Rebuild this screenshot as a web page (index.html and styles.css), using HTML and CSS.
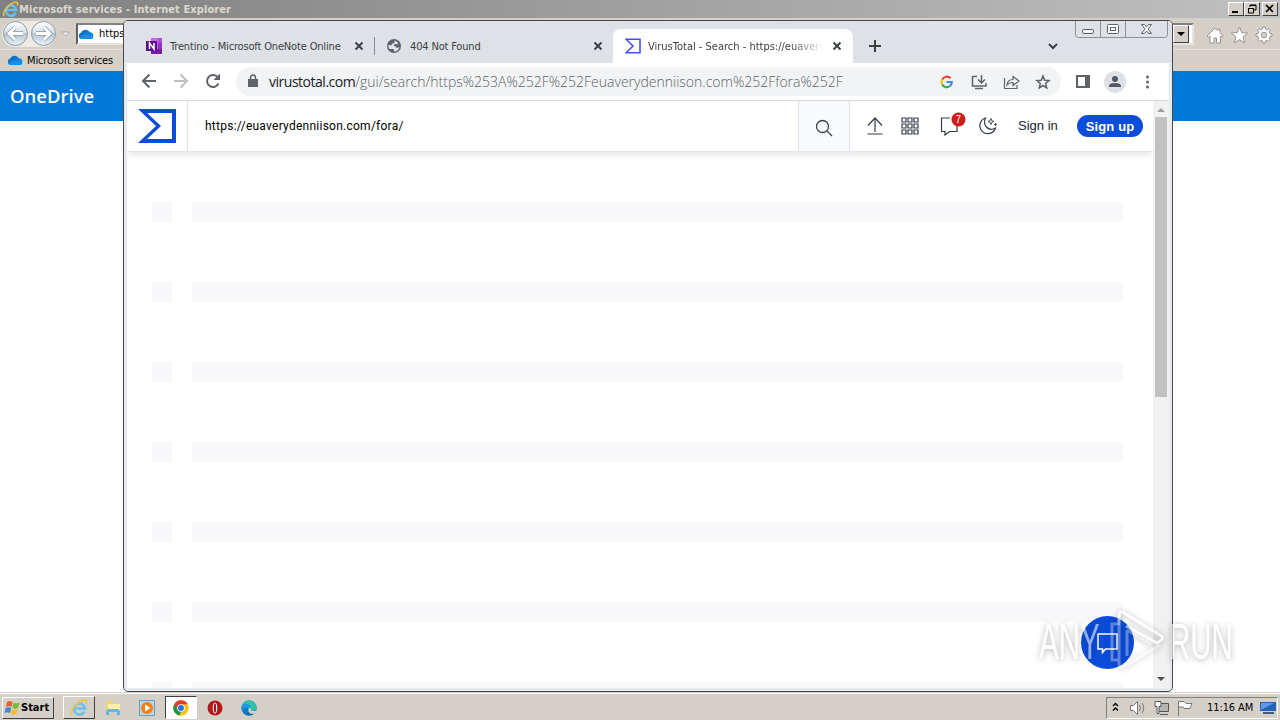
FILE: index.html
```html
<!DOCTYPE html>
<html lang="en">
<head>
<meta charset="UTF-8">
<title>VirusTotal - Search</title>
<link rel="stylesheet" href="styles.css">
</head>
<body>
<svg width="0" height="0" class="defs">
  <defs>
    <linearGradient id="cloud" x1="0" y1="0" x2="1" y2="1"><stop offset="0" stop-color="#0b5fb5"/><stop offset="1" stop-color="#1a9af0"/></linearGradient>
    <linearGradient id="ball" x1="0" y1="0" x2="0" y2="1"><stop offset="0" stop-color="#ffffff"/><stop offset=".45" stop-color="#dce3ea"/><stop offset=".5" stop-color="#b5c3d1"/><stop offset="1" stop-color="#eaf3fa"/></linearGradient>
    <linearGradient id="edge" x1="0" y1="0" x2="1" y2="1"><stop offset="0" stop-color="#1b9de2"/><stop offset="1" stop-color="#0c59a4"/></linearGradient>
    <symbol id="onedrive" viewBox="0 0 16 10"><path d="M3.5 10a3.3 3.3 0 0 1-.4-6.4A5 5 0 0 1 12 3.300 3.400 3.400 0 0 1 12.800 10z" fill="url(#cloud)"/><path d="M1 8.500 7.500 5.200 15.300 8.500A3 3 0 0 1 13 10H3.500A3 3 0 0 1 1 8.500z" fill="#1a8fe3"/></symbol>
    <symbol id="ie" viewBox="0 0 18 18"><path d="M14.500 12.500A5.500 5.500 0 1 1 15 9.500H5" fill="none" stroke="#6cc0f0" stroke-width="2.600"/><path d="M2.500 16C-1 13.500 6 3.500 13 1.500c4-1 4 1.500 3 3.500" fill="none" stroke="#f2c530" stroke-width="1.500"/></symbol>
    <symbol id="close" viewBox="0 0 10 10"><path d="M1.500 1.500l7 7M8.500 1.500l-7 7" stroke="#3c4043" stroke-width="1.900"/></symbol>
    <symbol id="sigma" viewBox="0 0 38 34"><path d="M0 0H38V34H0L18 17zM9 4 23 17 9 30H34V4z" fill-rule="evenodd"/></symbol>
  </defs>
</svg>

<div class="ie-window">
  <div class="ie-title">
    <svg width="17" height="17"><use href="#ie"/></svg>
    <span>Microsoft services - Internet Explorer</span>
    <div class="classic-btn first"><svg width="14" height="12"><path d="M3 9h6" stroke="#000" stroke-width="2"/></svg></div>
    <div class="classic-btn"><svg width="14" height="12"><path d="M5 4V2h6v5H9M5 2.500h6M3 5.500h6M3.500 5v5h5V5" fill="none" stroke="#000"/></svg></div>
    <div class="classic-btn last"><svg width="14" height="12"><path d="M3 2l7 7M10 2L3 9" stroke="#000" stroke-width="1.700"/></svg></div>
  </div>
  <div class="ie-toolbar">
    <svg width="74" height="30" viewBox="0 0 74 30">
      <rect x="2" y="2" width="54" height="26" rx="13" fill="#eeeae4"/>
      <g fill="url(#ball)" stroke="#8d9aa7"><circle cx="15.500" cy="14.500" r="12"/><circle cx="43.500" cy="14.500" r="12"/></g>
      <path d="M23 14.500H9m6-6-6 6 6 6M36 14.500h14m-6-6 6 6-6 6" fill="none" stroke="#8798a8" stroke-width="4.500"/>
      <path d="M23 14.500H9m6-6-6 6 6 6M36 14.500h14m-6-6 6 6-6 6" fill="none" stroke="#fff" stroke-width="3"/>
      <path d="M61.500 13h8l-4 4z" fill="#eee" stroke="#aaa"/>
    </svg>
    <div class="ie-address">
      <svg width="16" height="10"><use href="#onedrive"/></svg><span>https</span>
      <div class="drop"><svg width="8" height="4"><path d="M0 0h8L4 4z"/></svg></div>
    </div>
    <svg class="ie-tools" width="68" height="20" viewBox="0 0 68 20" fill="#fff" stroke="#99958e">
      <path d="M1 11 9 3l3 2.500V4h2v3.500l3 3.500-1.500 1-1-1V18h-4v-5H8v5H4v-7l-1.500 1z"/>
      <path d="M33.500 2l2.200 5.600 6 .4-4.600 3.900 1.500 6-5.100-3.300-5.100 3.300 1.500-6L25.300 8l6-.4z"/>
      <path d="M57 2h2l.5 2 1.700.7 1.800-1.200 1.500 1.500-1.200 1.800.7 1.700 2 .5v2l-2 .5-.7 1.700 1.200 1.800-1.500 1.500-1.800-1.200-1.700.7-.5 2h-2l-.5-2-1.700-.7-1.800 1.200-1.500-1.500 1.200-1.800-.7-1.700-2-.5v-2l2-.5.7-1.700-1.200-1.800 1.500-1.500 1.800 1.200 1.700-.7z"/>
      <circle cx="58" cy="10" r="2.800" fill="#d4d0c8"/>
    </svg>
  </div>
  <div class="ie-favorites"><svg width="16" height="10"><use href="#onedrive"/></svg><span>Microsoft services</span></div>
  <div class="onedrive-bar"><span>OneDrive</span></div>
  <div class="ie-page"></div>
</div>

<div class="chrome-window">
  <div class="tabs">
    <div class="tab tab-one">
      <svg width="18" height="18" viewBox="0 0 18 18"><path d="M5 1h11v16H5z" fill="#ca64ea"/><path d="M12 1h4v5h-4z" fill="#ae4bd5"/><path d="M12 6h4v6h-4z" fill="#9332bf"/><path d="M5 12h11v5H5z" fill="#7719aa"/><path d="M0 4h11v10H0z" fill="#5c1085"/><path d="M3.500 12V6L8 12V6" fill="none" stroke="#fff" stroke-width="1.500"/></svg>
      <span class="tab-text">Trentino - Microsoft OneNote Online</span>
      <svg class="x" width="10" height="10"><use href="#close"/></svg>
    </div>
    <div class="tab tab-two">
      <svg width="14" height="14" viewBox="0 0 14 14"><circle cx="7" cy="7" r="7" fill="#5f6368"/><path d="M8 1.500c-1 2-.2 2.800-2 3.100-1.500.2-1 1.700-2 1.600L1.500 6c-.3 2 .2 3 1 3.900L5 10c1 0 2 0 2 1v1.500c3 0 5-2 5.400-4.500L10 9 8.500 7.500 7 7V5.500L9 5l1.500.5.500-1.800z" fill="#dee1e6"/></svg>
      <span class="tab-text">404 Not Found</span>
      <svg class="x" width="10" height="10"><use href="#close"/></svg>
    </div>
    <div class="tab active">
      <svg width="16" height="16" viewBox="0 0 16 16"><path d="M1 1.200h14v13.600H1L8 8z" fill="none" stroke="#4a4df0" stroke-width="1.600"/></svg>
      <span class="tab-text fade">VirusTotal - Search - https://euavery</span>
      <svg class="x" width="10" height="10"><use href="#close"/></svg>
    </div>
    <svg class="plus" width="12" height="12"><path d="M6 0v12M0 6h12" stroke="#3c4043" stroke-width="2"/></svg>
    <svg class="chevron" width="10" height="7"><path d="M1 1l4 4 4-4" fill="none" stroke="#3c4043" stroke-width="2"/></svg>
    <div class="win-controls">
      <svg width="93" height="17" viewBox="0 0 93 17" fill="none" stroke="#5c6068">
        <path d="M.5 0v13q0 3.500 3 3.500h86q3 0 3-3V0M25.500 0v16M50.500 0v16" stroke="#8b9099"/>
        <rect x="7.500" y="8.500" width="11" height="4" rx="1.500" fill="#fff"/>
        <rect x="32.500" y="3.500" width="11" height="9" rx="1" fill="#fff"/><rect x="35.500" y="6.500" width="5" height="3"/>
        <path d="M66.500 3.500h3l2 2.500 2-2.500h3L73 8l3.500 4.500h-3l-2-2.500-2 2.500h-3L70 8z" fill="#fff"/>
      </svg>
    </div>
  </div>

  <div class="toolbar">
    <svg class="nav-icons" width="84" height="20" viewBox="0 0 84 20" fill="none" stroke-width="2">
      <path d="M17 10H4m6.500-6.500L4 10l6.500 6.500" stroke="#5f6368"/>
      <path d="M35 10h13m-6.500-6.500L48 10l-6.500 6.500" stroke="#bdbfc2"/>
      <path d="M79.500 12.500a6 6 0 1 1-1.200-6.700" stroke="#5f6368"/><path d="M81 2.500V9h-6.500z" fill="#5f6368"/>
    </svg>
    <div class="omnibox">
      <svg class="lock" width="10" height="13"><path d="M0 5h10v8H0z" fill="#5f6368"/><path d="M2.500 5V3.500a2.500 2.500 0 0 1 5 0V5" fill="none" stroke="#5f6368" stroke-width="1.500"/></svg>
      <div class="url"><b>virustotal.com</b><span>/gui/search/https%253A%252F%252Feuaverydenniison.com%252Ffora%252F</span></div>
      <svg class="actions" width="112" height="18" viewBox="0 0 112 18" fill="none" stroke="#5f6368" stroke-width="1.500">
        <g stroke-width="2.100"><path d="M3.200 6.600A5 5 0 0 1 11.500 5.300" stroke="#ea4335"/><path d="M3.200 6.600a5 5 0 0 0 0 4.900" stroke="#fbbc05"/><path d="M3.200 11.500a5 5 0 0 0 7.900 1.300" stroke="#34a853"/><path d="M11.100 12.800Q12.800 11.300 12.800 9H7.500" stroke="#4285f4"/></g>
        <path d="M38 3.500h-4.500v9.500h13.500v-3M36 15.500h8M42.500 2v7.500M39 6.500l3.500 3.500L46 6.500"/>
        <path d="M65.500 5v10.500h12.500V12M68 12q.5-5.500 6-5.500V3.500L80 8l-6 4.500V9.500q-4 0-6 2.500z" stroke-width="1.200"/>
        <path d="M104 3l1.700 4.200 4.300.4-3.300 2.900 1 4.300-3.700-2.300-3.700 2.300 1-4.300L98 7.600l4.300-.4z"/>
      </svg>
    </div>
    <svg class="menu-icons" width="80" height="22" viewBox="0 0 80 22">
      <path d="M2 4h14v13H2zM4 6h7v9H4z" fill="#5f6368" fill-rule="evenodd"/>
      <circle cx="41" cy="11" r="11" fill="#dee1e6"/><circle cx="41" cy="8" r="3" fill="#505866"/><path d="M35 16v-1q0-3 6-3t6 3v1z" fill="#505866"/>
      <g fill="#5f6368"><circle cx="73.500" cy="6" r="1.500"/><circle cx="73.500" cy="11" r="1.500"/><circle cx="73.500" cy="16" r="1.500"/></g>
    </svg>
  </div>

  <div class="viewport">
    <div class="page">
      <div class="vt-header">
        <div class="vt-logo"><svg width="38" height="34" fill="#0b4dda"><use href="#sigma"/></svg></div>
        <div class="vt-query">https://euaverydenniison.com/fora/</div>
        <div class="vt-search"><svg width="18" height="18" fill="none" stroke="#3c4350" stroke-width="1.300"><circle cx="7.500" cy="7.500" r="6"/><path d="M12 12l5 5"/></svg></div>
        <svg class="vt-icons" width="134" height="28" viewBox="0 0 134 28" fill="none" stroke="#363c46" stroke-width="1.200">
          <path d="M9 20V6.500M2 13.500l7-7.500 7 7.500M1.500 22h15"/>
          <path d="M36 6h4v4h-4zM42 6h4v4h-4zM48 6h4v4h-4zM36 12h4v4h-4zM42 12h4v4h-4zM48 12h4v4h-4zM36 18h4v4h-4zM42 18h4v4h-4zM48 18h4v4h-4z"/>
          <path d="M84 6h-8.500V19.500H79v3.500l4.500-3.500h7.500v-7"/>
          <path d="M119.500 6a8 8 0 1 0 10 10q-5.500 3-9-1-3.500-4-1-9z"/>
          <path d="M125 6.500l.8 2.200 2.200.8-2.200.8-.8 2.200-.8-2.200-2.200-.8 2.200-.8zM129.500 11v3M128 12.500h3" stroke-width=".9"/>
          <circle cx="92.500" cy="7.500" r="7" fill="#c9201b" stroke="none"/>
          <text x="89.500" y="11" class="badge">7</text>
        </svg>
        <span class="sign-in">Sign in</span>
        <span class="sign-up">Sign up</span>
      </div>
      <div class="rows">
        <div class="row"><i></i><b></b></div>
        <div class="row"><i></i><b></b></div>
        <div class="row"><i></i><b></b></div>
        <div class="row"><i></i><b></b></div>
        <div class="row"><i></i><b></b></div>
        <div class="row"><i></i><b></b></div>
        <div class="row"><i></i><b></b></div>
      </div>
    </div>
    <div class="scrollbar">
      <svg width="16" height="16"><path d="M4 11h8L8 7z" fill="#a0a0a0"/></svg>
      <div class="thumb"></div>
      <svg width="16" height="17"><path d="M4 6h8l-4 4z" fill="#505050"/></svg>
    </div>
  </div>
</div>

<div class="chat"><svg width="22" height="22" fill="none" stroke="#fff" stroke-width="1.500"><path d="M1 2h19v15H8.500L5.500 20.500V17H1z"/></svg></div>

<div class="watermark">
  <span>ANY</span>
  <svg width="58" height="68" viewBox="0 0 58 68" fill="none" stroke="#fff" stroke-width="3"><path d="M10 17V8q0-6 5-3L51 27q5 3 0 6L48 35 17 18"/><path d="M10 17v38q0 6 6 3L51 37M10 16H3v36h7M18 48V22M18 22l24 14" opacity=".6"/></svg>
  <span>RUN</span>
</div>

<div class="taskbar">
  <div class="start">
    <svg width="17" height="16" viewBox="0 0 17 16"><path d="M3 2q3-2 5.500 0L7.500 7Q5 5.500 2 7z" fill="#e8602c"/><path d="M9.500 2.500q3 1.500 6 0L14 8q-3 1.500-5.500 0z" fill="#7fb93c"/><path d="M1.700 8q3-1.500 5.500 0L6 13Q3.500 11.500.5 13z" fill="#3f87d0"/><path d="M8.200 9q3 1.500 5.700 0l-1.500 5q-3 1.500-5.500 0z" fill="#f4bd2a"/></svg>
    <span>Start</span>
  </div>
  <div class="task raised"><svg width="18" height="18"><use href="#ie"/></svg></div>
  <div class="task"><svg width="18" height="18"><path d="M2 2h5l1 2h7v9H2z" fill="#f3d66b"/><path d="M4 5h12v6H4z" fill="#fbedaa"/><path d="M2 16v-4l2-2h10l2 2v4h-3v-3H5v3z" fill="#68b7d8"/></svg></div>
  <div class="task"><svg width="18" height="18"><path d="M1.500 1.500h15v15h-15z" fill="#b9d8f0" stroke="#6a9cc8"/><circle cx="9" cy="9" r="6" fill="#f08010"/><path d="M7 5.500 12.500 9 7 12.500z" fill="#fff"/></svg></div>
  <div class="task pressed"><svg width="16" height="16" viewBox="0 0 16 16"><circle cx="8" cy="8" r="7.700" fill="#fbc116"/><path d="M8 8 4.200 9.800 1.200 4.300A7.700 7.700 0 0 1 14.800 4.300L8 4.500z" fill="#e33b2e"/><path d="M1.200 4.300 5 10.500l3 1.200-1.500 3.900A7.700 7.700 0 0 1 1.200 4.300z" fill="#229342"/><circle cx="8" cy="8" r="3.800" fill="#fff"/><circle cx="8" cy="8" r="2.900" fill="#1a73e8"/></svg></div>
  <div class="task"><svg width="16" height="16"><circle cx="8" cy="8" r="7.500" fill="#b5181b"/><ellipse cx="8" cy="8" rx="2.300" ry="5.500" fill="#fff"/><ellipse cx="8" cy="8" rx="1.200" ry="4.800" fill="#a01518"/></svg></div>
  <div class="task"><svg width="16" height="16" viewBox="0 0 16 16"><circle cx="8" cy="8" r="7.700" fill="url(#edge)"/><path d="M.4 7A7.700 7.700 0 0 1 15.700 8q-.5 3-4 3-3 0-1.800-2Q10 5 6 5 2 5 .4 7z" fill="#35c1a5"/><path d="M.4 7Q2 3 7 4q3 1 3 4-1 2 .5 2.800-4 .5-3.500-3Q2 6 .4 9z" fill="#1b9de2"/><path d="M9.900 9q-1 2 2.100 2.100 2 0 3.200-.7l.5 1.500-3.200 2q-4 0-5-2.500-.5-2 .8-3.500 2-.5 1.600 1.100z" fill="#d4d0c8"/></svg></div>
  <div class="tray">
    <svg width="91" height="18" viewBox="-1 0 91 18" fill="none" stroke="#777">
      <path d="M5 7 7.500 4.500 10 7M5 11.500 7.500 9l2.500 2.500" stroke="#000" stroke-width="1.300"/>
      <path d="M22.500 6.500h3l4-4v13l-4-4h-3z" fill="#fff"/><path d="M31.500 6q2 3 0 6M34 4q3.500 5 0 10"/>
      <path d="M50.500 4.500h10v8h-10zM52 15.500h8" fill="#b5b5b5" stroke="#555"/><path d="M47 2.500h6v5h-2v7h-2v-7h-2z" fill="#fff" stroke="#555"/>
      <path d="M70.500 17V2.500h5.500l2 2h6l-2 5h-6l-1-1.500h-4" fill="#fff"/>
    </svg>
    <span>11:16 AM</span>
    <svg width="16" height="14"><path d="M0 1h16v9H0z" fill="#2463b5"/><path d="M1 2h13L1 9z" fill="#5f9be3"/><path d="M3 12h11" stroke="#4a5a70" stroke-width="2"/></svg>
  </div>
</div>
</body>
</html>
```

FILE: styles.css
```css
* {
  box-sizing: border-box;
}
body {
  margin: 0;
  width: 1280px;
  height: 720px;
  overflow: hidden;
  position: relative;
  background: #fff;
  font-family: "DejaVu Sans Condensed", "DejaVu Sans", sans-serif;
  font-size: 11px;
  font-stretch: condensed;
  color: #000;
}
svg {
  display: block;
  flex: none;
}
.defs {
  position: absolute;
}
span, .url, .vt-query {
  white-space: nowrap;
}

/* internet explorer */
.ie-window {
  height: 692px;
  display: flex;
  flex-direction: column;
}
.ie-title {
  height: 18px;
  display: flex;
  align-items: center;
  padding: 0 2px;
  background: linear-gradient(90deg, #808080, #c0c0c0);
  color: #dcd8d0;
  font-weight: bold;
}
.ie-title span {
  width: 220px;
  letter-spacing: 0.09px;
}
.classic-btn {
  width: 16px;
  height: 14px;
  background: #d4d0c8;
  border: 1px solid;
  border-color: #fff #404040 #404040 #fff;
}
.classic-btn.first {
  margin-left: auto;
}
.classic-btn.last {
  margin-left: 2px;
}
.ie-toolbar {
  height: 31px;
  background: #d4d0c8;
  display: flex;
  align-items: center;
}
.ie-address {
  width: 1118px;
  height: 22px;
  margin-left: 2px;
  margin-right: 1px;
  background: #fff;
  border: 2px solid;
  border-color: #808080 #e8e5df #e8e5df #606060;
  display: flex;
  align-items: center;
  gap: 5px;
}
.drop {
  width: 16px;
  height: 18px;
  margin-left: auto;
  margin-right: 3px;
  background: #d4d0c8;
  border: 1px solid;
  border-color: #fff #404040 #404040 #fff;
  display: flex;
  align-items: center;
  justify-content: center;
}
.ie-tools {
  margin-left: 11px;
  margin-top: 2px;
}
.ie-favorites {
  height: 22px;
  background: #d4d0c8;
  border-top: 1px solid #e5e2dc;
  padding: 0 0 1px 7px;
  display: flex;
  align-items: center;
  gap: 4px;
  letter-spacing: -0.15px;
}
.onedrive-bar {
  height: 50px;
  background: #0078d7;
  color: #fff;
  padding: 0 0 2px 10px;
  display: flex;
  align-items: center;
  font: 600 18.5px "Open Sans", sans-serif;
}
.ie-page {
  flex: 1;
  background: #fff;
}

/* chrome */
.chrome-window {
  position: absolute;
  left: 123px;
  top: 20px;
  width: 1050px;
  height: 672px;
  border: 1px solid #45484c;
  border-radius: 5px;
  background: #e8eaed;
  padding: 0 2px 3px;
  display: flex;
  flex-direction: column;
  overflow: hidden;
}
.tabs {
  height: 42px;
  background: #dee1e6;
  margin: 0 -2px;
  display: flex;
  position: relative;
  padding: 8px 0 0 10px;
}
.tab {
  height: 34px;
  display: flex;
  align-items: center;
  padding: 0 11px 0 12px;
  color: #3c4043;
}
.tab-text {
  margin-left: 7px;
  letter-spacing: -0.16px;
}
.tab .x {
  margin-left: auto;
}
.tab-one {
  width: 241px;
}
.tab-one .tab-text {
  margin-left: 6px;
}
.tab-two {
  width: 238px;
  padding-right: 10px;
  position: relative;
}
.tab-two::before {
  content: "";
  position: absolute;
  left: -1px;
  top: 8px;
  height: 18px;
  border-left: 1px solid #868b91;
}
.tab-two .tab-text {
  margin-left: 9px;
}
.tab.active {
  width: 240px;
  background: #fff;
  border-radius: 8px 8px 0 0;
}
.fade {
  width: 175px;
  overflow: hidden;
  letter-spacing: 0;
  -webkit-mask-image: linear-gradient(90deg, #000 82%, transparent);
  mask-image: linear-gradient(90deg, #000 82%, transparent);
}
.plus {
  margin: 11px 0 0 16px;
}
.chevron {
  margin: 14px 0 0 167px;
}
.win-controls {
  position: absolute;
  right: 4px;
  top: 0;
}
.toolbar {
  height: 38px;
  background: #fff;
  border-bottom: 1px solid #d5d8dc;
  margin: 0 1px;
  display: flex;
  align-items: center;
  padding: 0 8px 0 12px;
}
.nav-icons {
  margin-top: -1px;
}
.omnibox {
  width: 825px;
  height: 29px;
  margin-left: 13px;
  border-radius: 15px;
  background: #f1f3f4;
  display: flex;
  align-items: center;
  padding-left: 12px;
}
.lock {
  margin-top: -2px;
}
.url {
  margin-left: 11px;
  width: 575px;
  font: 300 14px "Open Sans", sans-serif;
  color: #5f6368;
}
.url b {
  font-weight: 400;
  letter-spacing: -0.48px;
  color: #202124;
}
.actions {
  margin-left: auto;
  margin-right: 10px;
}
.menu-icons {
  margin-left: 13px;
}
.viewport {
  flex: 1;
  min-height: 0;
  display: flex;
  margin: 0 1px;
}
.page {
  width: 1026px;
  overflow: hidden;
  background: #fff;
}
.vt-header {
  height: 51px;
  display: flex;
  align-items: center;
  border-bottom: 1px solid #e3e5e9;
  box-shadow: 0 2px 8px rgba(0,0,0,0.12);
}
.vt-logo {
  width: 61px;
  height: 50px;
  padding: 8px 0 0 11px;
  border-right: 1px solid #dfe2e8;
}
.vt-query {
  width: 610px;
  padding-left: 17px;
  font: 12px Roboto, sans-serif;
  letter-spacing: 0.25px;
}
.vt-search {
  width: 52px;
  height: 50px;
  background: #f8fafd;
  border: solid #dfe2e8;
  border-width: 0 1px;
  padding: 18px 0 0 16px;
}
.vt-icons {
  margin-left: 16px;
}
.badge {
  font: 10px "Liberation Sans", sans-serif;
  fill: #fff;
  stroke: none;
}
.sign-in {
  width: 40px;
  margin-left: 18px;
  margin-top: -1px;
  font: 13px "Liberation Sans", sans-serif;
  color: #202633;
}
.sign-up {
  width: 66px;
  height: 22px;
  margin-left: 19px;
  border-radius: 11px;
  background: #0b4dda;
  color: #fff;
  font: bold 13px/23px "Liberation Sans", sans-serif;
  letter-spacing: 0.15px;
  text-align: center;
}
.rows {
  padding: 50px 30px 0 25px;
  display: flex;
  flex-direction: column;
  gap: 60px;
}
.row {
  height: 20px;
  display: flex;
  gap: 20px;
}
.row i {
  width: 20px;
  background: #f8f8fb;
}
.row b {
  flex: 1;
  background: #f8f8fb;
}
.scrollbar {
  width: 16px;
  background: #f1f1f1;
  display: flex;
  flex-direction: column;
}
.thumb {
  width: 12px;
  height: 280px;
  margin: 0 2px auto;
  background: #c1c1c1;
}
.chat {
  position: absolute;
  left: 1081px;
  top: 616px;
  width: 53px;
  height: 53px;
  border-radius: 50%;
  background: #0b4dda;
  display: flex;
  align-items: center;
  justify-content: center;
}
.watermark {
  position: absolute;
  left: 1039px;
  top: 608px;
  height: 68px;
  display: flex;
  align-items: center;
  color: #fff;
  opacity: 0.55;
  font: 50px "Liberation Sans", sans-serif;
  filter: drop-shadow(0 1px 3px rgba(0,0,0,0.55));
}
.watermark span {
  width: 66px;
  transform: scaleX(0.59);
  transform-origin: left;
}
.watermark svg {
  margin-left: 4px;
  margin-right: 2px;
}

/* taskbar */
.taskbar {
  height: 28px;
  background: #d4d0c8;
  border-top: 1px solid #d4d0c8;
  box-shadow: inset 0 1px #fff;
  display: flex;
  align-items: center;
  padding: 2px 2px 0;
}
.start {
  width: 52px;
  height: 22px;
  display: flex;
  align-items: center;
  padding-left: 1px;
  border: 1px solid;
  border-color: #fff #404040 #404040 #fff;
  font-weight: bold;
  margin-right: 9px;
}
.task {
  width: 34px;
  height: 23px;
  display: flex;
  align-items: center;
  justify-content: center;
}
.task.raised {
  width: 32px;
  border: 1px solid;
  border-color: #fff #404040 #404040 #fff;
}
.raised + .task {
  margin-left: 1px;
}
.task.pressed {
  width: 32px;
  margin: 0 1px;
  background: #fff;
  border: 1px solid;
  border-color: #404040 #fff #fff #404040;
}
.tray {
  width: 172px;
  height: 22px;
  margin-left: auto;
  border: 1px solid;
  border-color: #808080 #fff #fff #808080;
  display: flex;
  align-items: center;
}
.tray span {
  width: 50px;
  margin: 0 3px 0 9px;
  letter-spacing: -0.1px;
}
```
